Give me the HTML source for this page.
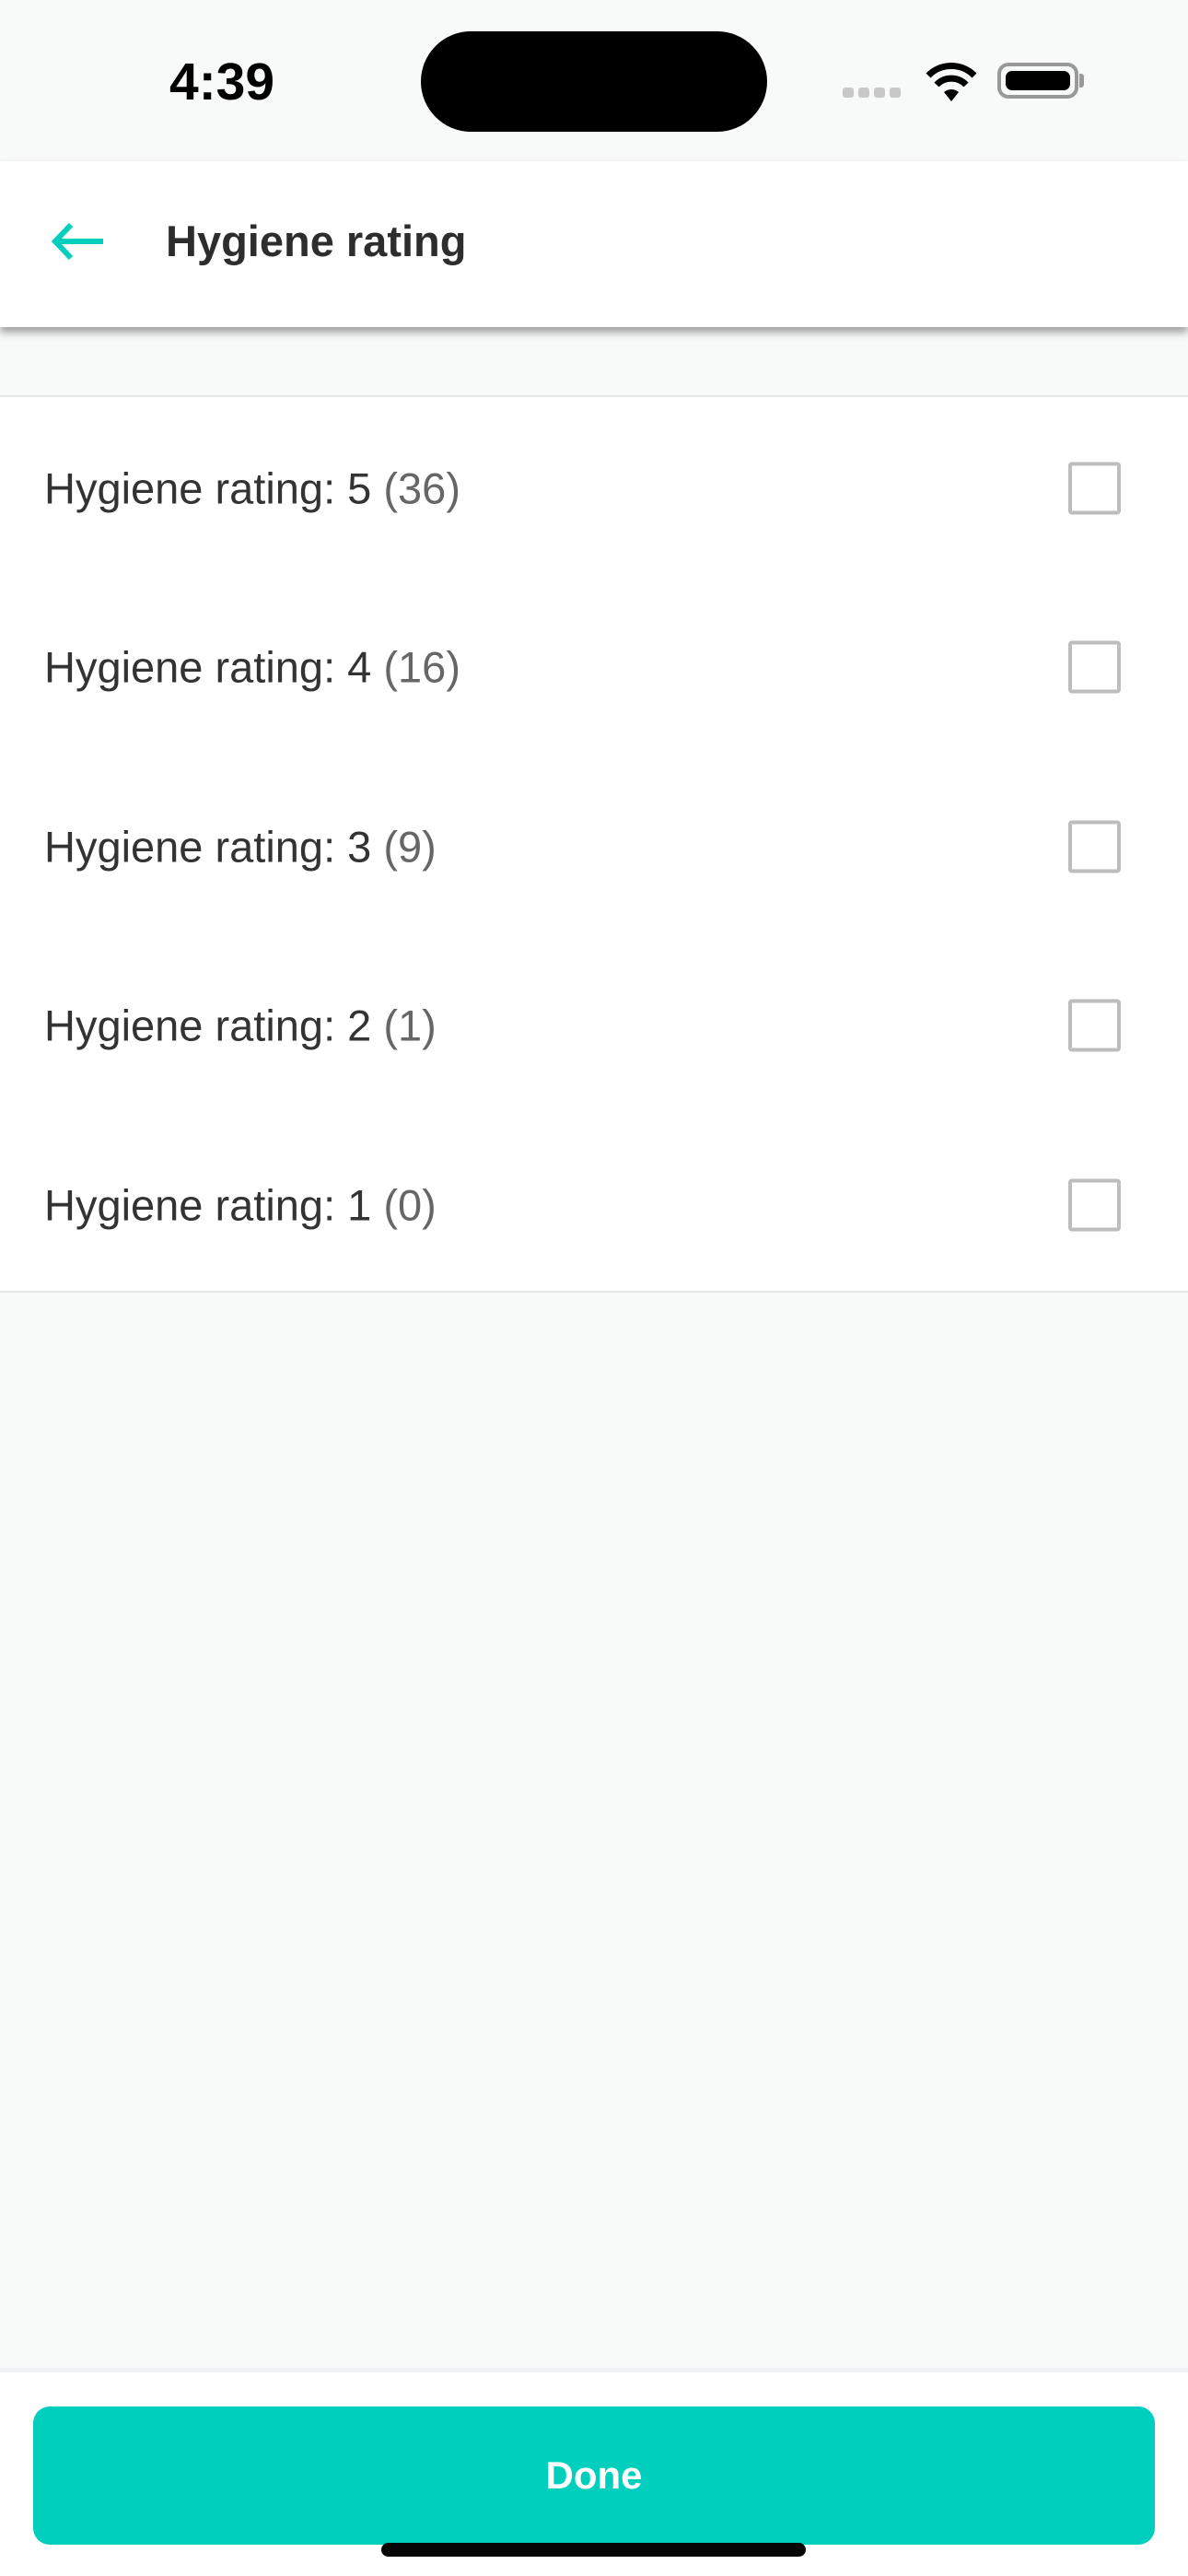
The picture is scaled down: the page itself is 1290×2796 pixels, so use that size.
<!DOCTYPE html>
<html><head><meta charset="utf-8"><style>
*{margin:0;padding:0;box-sizing:border-box}
body{width:1290px;height:2796px;background:#f8f9f9;font-family:"Liberation Sans",sans-serif;position:relative;overflow:hidden}
.abs{position:absolute}
.row{position:absolute;left:0;width:1290px;height:194px}
.row span.t{position:absolute;left:48px;top:50%;transform:translateY(-50%);font-size:47px;color:#333}
.row span.t i{font-style:normal;color:#666}
.cb{position:absolute;left:1160px;top:50%;transform:translateY(-50%);width:57px;height:57px;border:4px solid #bdbdbd;border-radius:4px}
</style></head><body>
<div class="abs" style="left:184px;top:56px;font-size:57px;font-weight:bold;color:#000">4:39</div>
<div class="abs" style="left:457px;top:34px;width:376px;height:109px;background:#000;border-radius:55px"></div>
<div class="abs" style="left:915px;top:95px;display:flex;gap:5px">
<div style="width:12px;height:11px;background:#c8c8c8;border-radius:3px"></div><div style="width:12px;height:11px;background:#c8c8c8;border-radius:3px"></div><div style="width:12px;height:11px;background:#c8c8c8;border-radius:3px"></div><div style="width:12px;height:11px;background:#c8c8c8;border-radius:3px"></div></div>
<svg class="abs" style="left:1003px;top:66px" width="60" height="46" viewBox="0 0 60 46"><path d="M30 44 L22 34 A12 12 0 0 1 38 34 Z" fill="#000"/><path d="M14 26 A22 22 0 0 1 46 26" stroke="#000" stroke-width="7" fill="none"/><path d="M5 16 A35 35 0 0 1 55 16" stroke="#000" stroke-width="7" fill="none"/></svg>
<div class="abs" style="left:1083px;top:68px;width:88px;height:39px;border:4px solid #999;border-radius:12px;padding:5px"><div style="width:100%;height:100%;background:#000;border-radius:7px"></div></div>
<div class="abs" style="left:1172px;top:80px;width:5px;height:15px;background:#999;border-radius:0 3px 3px 0"></div>

<div class="abs" style="left:0;top:175px;width:1290px;height:180px;background:#fff;box-shadow:0 6px 8px rgba(0,0,0,0.35)"></div>
<svg class="abs" style="left:55px;top:238px" width="60" height="48" viewBox="0 0 60 48"><path d="M57 24 H6 M22 6 L5 24 L22 42" stroke="#00cfbd" stroke-width="6" fill="none"/></svg>
<div class="abs" style="left:180px;top:234px;font-size:47px;font-weight:bold;color:#2d2d2d">Hygiene rating</div>

<div class="abs" style="left:0;top:429px;width:1290px;height:974px;background:#fff;border-top:2px solid #e4e6e7;border-bottom:2px solid #e4e6e7"></div>
<div class="row" style="top:433px"><span class="t">Hygiene rating: 5 <i>(36)</i></span><div class="cb"></div></div>
<div class="row" style="top:627px"><span class="t">Hygiene rating: 4 <i>(16)</i></span><div class="cb"></div></div>
<div class="row" style="top:822px"><span class="t">Hygiene rating: 3 <i>(9)</i></span><div class="cb"></div></div>
<div class="row" style="top:1016px"><span class="t">Hygiene rating: 2 <i>(1)</i></span><div class="cb"></div></div>
<div class="row" style="top:1211px"><span class="t">Hygiene rating: 1 <i>(0)</i></span><div class="cb"></div></div>

<div class="abs" style="left:0;top:2570px;width:1290px;height:226px;background:#fff;border-top:5px solid #f1f2f4"></div>
<div class="abs" style="left:36px;top:2612px;width:1218px;height:150px;background:#00cfbd;border-radius:18px;color:#fff;font-weight:bold;font-size:42px;display:flex;align-items:center;justify-content:center">Done</div>
<div class="abs" style="left:414px;top:2760px;width:461px;height:15px;background:#060606;border-radius:8px"></div>
</body></html>
